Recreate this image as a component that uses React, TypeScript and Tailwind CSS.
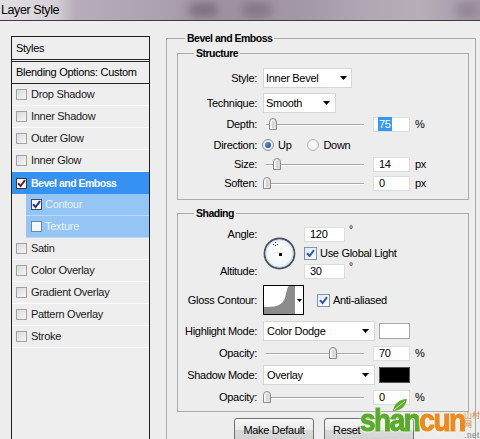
import React from "react";

function TickMark({ color }: { color: string }) {
  return (
    <svg width="9" height="9" viewBox="0 0 9 9" className="block">
      <path d="M1 4.2 L3.6 7 L8 1.2" fill="none" stroke={color} strokeWidth="2" />
    </svg>
  );
}

function ListCheck({ kind }: { kind: "off" | "active" | "subOn" | "subOff" }) {
  if (kind === "active")
    return (
      <div className="w-[11px] h-[11px] shrink-0 border border-[#3a3a3a] bg-white flex items-center justify-center">
        <TickMark color="#6b1f2a" />
      </div>
    );
  if (kind === "subOn")
    return (
      <div className="w-[11px] h-[11px] shrink-0 border border-[#3b4a6b] bg-white flex items-center justify-center">
        <TickMark color="#24368a" />
      </div>
    );
  if (kind === "subOff")
    return <div className="w-[11px] h-[11px] shrink-0 border border-[#6f86a6] bg-[#f2f7fc]" />;
  return <div className="w-[11px] h-[11px] shrink-0 border border-[#a2a2a2] bg-[linear-gradient(135deg,#d9d9d9,#f7f7f7)]" />;
}

function RightCheck() {
  return (
    <div className="w-[13px] h-[13px] shrink-0 border border-[#7f93b6] bg-[linear-gradient(135deg,#e3e9f2,#ffffff)] flex items-center justify-center">
      <TickMark color="#3656b0" />
    </div>
  );
}

function Arrow() {
  return (
    <svg width="7" height="4" viewBox="0 0 7 4" className="block shrink-0">
      <polygon points="0,0 7,0 3.5,4" fill="#000" />
    </svg>
  );
}

function Label({ children }: { children: React.ReactNode }) {
  return <div className="w-[79px] shrink-0 text-right">{children}</div>;
}

function Thumb({ left }: { left: number }) {
  return (
    <svg
      width="8"
      height="12"
      viewBox="0 0 8 12"
      className="absolute top-[2px] block"
      style={{ left }}
    >
      <defs>
        <linearGradient id="thg" x1="0" y1="0" x2="1" y2="0">
          <stop offset="0" stopColor="#ffffff" />
          <stop offset="1" stopColor="#d4d4d4" />
        </linearGradient>
      </defs>
      <path d="M0.5 11.5 V4 Q0.5 0.5 4 0.5 Q7.5 0.5 7.5 4 V11.5 Z" fill="url(#thg)" stroke="#8c8c8c" />
      <line x1="4" y1="3" x2="4" y2="10" stroke="#c2c2c2" />
    </svg>
  );
}

function Slider({ left }: { left: number }) {
  return (
    <div className="relative w-[104px] h-[16px] shrink-0">
      <div className="absolute left-[3px] right-[3px] top-[8px] h-[1px] bg-[#a8a8a8]" />
      <div className="absolute left-[3px] right-[3px] top-[9px] h-[1px] bg-white" />
      <Thumb left={left} />
    </div>
  );
}

function Field({ children }: { children: React.ReactNode }) {
  return (
    <div className="ml-[6px] w-[37px] h-[15px] shrink-0 bg-white border border-[#dcdcdc] flex items-center pl-[4px]">
      {children}
    </div>
  );
}

function SliderRow({
  label,
  left,
  value,
  unit,
  selected,
}: {
  label: string;
  left: number;
  value: string;
  unit: string;
  selected?: boolean;
}) {
  return (
    <div className="flex items-center h-[16px]">
      <Label>{label}</Label>
      <div className="ml-[6px]">
        <Slider left={left} />
      </div>
      <Field>
        {selected ? (
          <span className="bg-[#3399ff] text-white px-[1px] leading-[14px]">{value}</span>
        ) : (
          <span className="pl-[1px]">{value}</span>
        )}
      </Field>
      <span className="ml-[5px]">{unit}</span>
    </div>
  );
}

function AngleDial() {
  return (
    <svg width="33" height="33" viewBox="0 0 33 33" className="block">
      <defs>
        <radialGradient id="dialg" cx="0.45" cy="0.4" r="0.6">
          <stop offset="0" stopColor="#ffffff" />
          <stop offset="0.8" stopColor="#f1f4f8" />
          <stop offset="1" stopColor="#dfe7f0" />
        </radialGradient>
      </defs>
      <circle cx="16.5" cy="16.5" r="15" fill="url(#dialg)" stroke="#4a535d" strokeWidth="1.8" />
      <circle cx="16.5" cy="16.5" r="13.6" fill="none" stroke="#c9dbee" strokeWidth="1" />
      <g stroke="#222" strokeWidth="1">
        <line x1="12.5" y1="5" x2="12.5" y2="6" />
        <line x1="12.5" y1="8" x2="12.5" y2="9" />
        <line x1="10" y1="7.5" x2="11" y2="7.5" />
        <line x1="14" y1="7.5" x2="15" y2="7.5" />
      </g>
      <rect x="16" y="16" width="3" height="3" fill="#000" />
    </svg>
  );
}

function ContourPreview() {
  return (
    <div className="ml-[6px] w-[41px] h-[30px] shrink-0 border border-black bg-white flex items-center">
      <svg width="31" height="28" viewBox="0 0 31 28" className="block shrink-0">
        <path d="M0 28 V21 C10 21 18 20.5 21 12 C22.5 6 23 2 24.5 0 H31 V28 Z" fill="#8c8c8c" />
      </svg>
      <div className="ml-[2px]">
        <svg width="5" height="3" viewBox="0 0 5 3" className="block">
          <polygon points="0,0 5,0 2.5,3" fill="#000" />
        </svg>
      </div>
    </div>
  );
}

const listItems: { label: string; kind: "off" | "active" | "subOn" | "subOff" }[] = [
  { label: "Drop Shadow", kind: "off" },
  { label: "Inner Shadow", kind: "off" },
  { label: "Outer Glow", kind: "off" },
  { label: "Inner Glow", kind: "off" },
  { label: "Bevel and Emboss", kind: "active" },
  { label: "Contour", kind: "subOn" },
  { label: "Texture", kind: "subOff" },
  { label: "Satin", kind: "off" },
  { label: "Color Overlay", kind: "off" },
  { label: "Gradient Overlay", kind: "off" },
  { label: "Pattern Overlay", kind: "off" },
  { label: "Stroke", kind: "off" },
];

function ListRow({ label, kind }: { label: string; kind: "off" | "active" | "subOn" | "subOff" }) {
  if (kind === "active")
    return (
      <div className="h-[22px] bg-[#3592f3] pl-[4px] flex items-center">
        <ListCheck kind={kind} />
        <span className="ml-[4px] font-bold text-white text-[10.5px] tracking-[-0.5px]">{label}</span>
      </div>
    );
  if (kind === "subOn" || kind === "subOff")
    return (
      <div className="h-[22px] ml-[14px] bg-[#94c5f4] border-b border-[#bcdaf7] pl-[5px] flex items-center">
        <ListCheck kind={kind} />
        <span className="ml-[3px] text-[#e9f2fb]">{label}</span>
      </div>
    );
  return (
    <div className="h-[22px] border-b border-[#fbfbfb] pl-[4px] flex items-center">
      <ListCheck kind={kind} />
      <span className="ml-[4px] text-[#1a1a1a]">{label}</span>
    </div>
  );
}

export default function App() {
  return (
    <div className="relative w-[480px] h-[439px] overflow-hidden bg-[#ededed] text-black font-['Liberation_Sans',Arial,sans-serif] text-[11px] leading-[13px] tracking-[-0.3px]">
      {/* title bar */}
      <div className="relative h-[21px] border-b border-[#44394a] overflow-hidden bg-[linear-gradient(90deg,#e2dfe3_0px,#d6d1d7_55px,#b8aebb_75px,#aca1af_160px,#9d91a0_230px,#a398a6_300px,#b2a8b4_370px,#b7aeb9_420px,#a599a8_480px)]">
        <div className="absolute left-[188px] top-[3px] w-[30px] h-[14px] rounded-full bg-[#6c5f70] blur-[5px] opacity-70" />
        <div className="absolute left-[242px] top-[3px] w-[30px] h-[14px] rounded-full bg-[#6f6373] blur-[5px] opacity-60" />
        <div className="absolute left-[455px] top-[2px] w-[24px] h-[16px] rounded-full bg-[#8a7e8d] blur-[5px] opacity-70" />
        <span className="relative block pl-[1px] text-[12.5px] leading-[20px] tracking-[-0.4px] text-black">Layer Style</span>
      </div>

      {/* body */}
      <div className="flex items-start pl-[11px] pt-[11px]">
        {/* left list */}
        <div className="mt-[4px] w-[139px] h-[420px] shrink-0 border border-[#1e1e1e] bg-[#eeeeee]">
          <div className="h-[25px] border-b-[3px] border-double border-[#262626] pl-[4px] flex items-center">Styles</div>
          <div className="h-[22px] border-b border-[#262626] pl-[4px] flex items-center">Blending Options: Custom</div>
          {listItems.map((it) => (
            <ListRow key={it.label} label={it.label} kind={it.kind} />
          ))}
        </div>

        {/* right panel */}
        <fieldset className="ml-[16px] w-[310px] h-[430px] shrink-0 border border-[#ababab]">
          <legend className="ml-[18px] px-[2px] font-bold text-[10.5px] leading-[13px] tracking-[-0.5px]">
            Bevel and Emboss
          </legend>

          {/* Structure */}
          <fieldset className="ml-[10px] mt-[2px] w-[292px] border border-[#ababab]">
            <legend className="ml-[16px] px-[2px] font-bold text-[10.5px] leading-[13px] tracking-[-0.5px]">
              Structure
            </legend>
            <div className="flex flex-col pt-[8px] pb-[8px]">
              <div className="flex items-center h-[20px]">
                <Label>Style:</Label>
                <div className="ml-[6px] w-[89px] h-[20px] bg-white border border-[#d6d6d6] flex items-center justify-between pl-[2px] pr-[4px]">
                  <span>Inner Bevel</span>
                  <Arrow />
                </div>
              </div>
              <div className="flex items-center h-[20px] mt-[5px]">
                <Label>Technique:</Label>
                <div className="ml-[6px] w-[73px] h-[20px] bg-white border border-[#d6d6d6] flex items-center justify-between pl-[2px] pr-[5px]">
                  <span>Smooth</span>
                  <Arrow />
                </div>
              </div>
              <div className="mt-[3px]">
                <SliderRow label="Depth:" left={6} value="75" unit="%" selected />
              </div>
              <div className="flex items-center h-[16px] mt-[5px]">
                <Label>Direction:</Label>
                <div className="ml-[5px] w-[12px] h-[12px] rounded-full border border-[#8a8f96] bg-[radial-gradient(circle,#ffffff,#dfe3e8)] flex items-center justify-center">
                  <div className="w-[6px] h-[6px] rounded-full bg-[radial-gradient(circle_at_35%_35%,#5f8fd0,#163f7a)]" />
                </div>
                <span className="ml-[4px]">Up</span>
                <div className="ml-[16px] w-[12px] h-[12px] rounded-full border border-[#b5b5b5] bg-[radial-gradient(circle,#ffffff,#e6e6e6)]" />
                <span className="ml-[4px]">Down</span>
              </div>
              <div className="mt-[3px]">
                <SliderRow label="Size:" left={10} value="14" unit="px" />
              </div>
              <div className="mt-[3px]">
                <SliderRow label="Soften:" left={0} value="0" unit="px" />
              </div>
            </div>
          </fieldset>

          {/* Shading */}
          <fieldset className="ml-[10px] mt-[7px] w-[292px] border border-[#ababab]">
            <legend className="ml-[16px] px-[2px] font-bold text-[10.5px] leading-[13px] tracking-[-0.5px]">
              Shading
            </legend>
            <div className="flex flex-col pt-[7px] pb-[6px]">
              <div className="flex h-[52px]">
                <div className="w-[79px] shrink-0 flex flex-col justify-between text-right">
                  <div className="h-[15px] flex items-center justify-end">Angle:</div>
                  <div className="h-[15px] flex items-center justify-end">Altitude:</div>
                </div>
                <div className="ml-[6px] self-center">
                  <AngleDial />
                </div>
                <div className="ml-[8px] flex flex-col justify-between">
                  <div className="flex items-start h-[15px]">
                    <div className="w-[41px] h-[15px] bg-white border border-[#dcdcdc] flex items-center pl-[5px]">120</div>
                    <span className="ml-[4px] text-[10px] leading-[10px] -mt-[2px]">°</span>
                  </div>
                  <div className="flex items-center h-[14px]">
                    <RightCheck />
                    <span className="ml-[3px]">Use Global Light</span>
                  </div>
                  <div className="flex items-start h-[15px]">
                    <div className="w-[41px] h-[15px] bg-white border border-[#dcdcdc] flex items-center pl-[5px]">30</div>
                    <span className="ml-[4px] text-[10px] leading-[10px] -mt-[2px]">°</span>
                  </div>
                </div>
              </div>

              <div className="flex items-center h-[30px] mt-[6px]">
                <Label>Gloss Contour:</Label>
                <ContourPreview />
                <div className="ml-[13px]">
                  <RightCheck />
                </div>
                <span className="ml-[3px]">Anti-aliased</span>
              </div>

              <div className="flex items-center h-[20px] mt-[6px]">
                <Label>Highlight Mode:</Label>
                <div className="ml-[6px] w-[112px] h-[20px] bg-white border border-[#d6d6d6] flex items-center justify-between pl-[3px] pr-[5px]">
                  <span>Color Dodge</span>
                  <Arrow />
                </div>
                <div className="ml-[4px] w-[31px] h-[16px] bg-white border border-[#a8a8a8]" />
              </div>
              <div className="mt-[4px]">
                <SliderRow label="Opacity:" left={66} value="70" unit="%" />
              </div>
              <div className="flex items-center h-[20px] mt-[4px]">
                <Label>Shadow Mode:</Label>
                <div className="ml-[6px] w-[112px] h-[20px] bg-white border border-[#d6d6d6] flex items-center justify-between pl-[3px] pr-[5px]">
                  <span>Overlay</span>
                  <Arrow />
                </div>
                <div className="ml-[4px] w-[31px] h-[16px] bg-black border border-[#555]" />
              </div>
              <div className="mt-[4px]">
                <SliderRow label="Opacity:" left={0} value="0" unit="%" />
              </div>
            </div>
          </fieldset>

          {/* buttons */}
          <div className="flex justify-center gap-[10px] mt-[6px] pl-[6px]">
            <div className="w-[80px] h-[24px] rounded-[3px] border border-[#707070] bg-[linear-gradient(180deg,#f7f7f7,#e9e9e9_50%,#d9d9d9_51%,#d2d2d2)] flex items-center justify-center">
              Make Default
            </div>
            <div className="w-[90px] h-[24px] rounded-[3px] border border-[#707070] bg-[linear-gradient(180deg,#f7f7f7,#e9e9e9_50%,#d9d9d9_51%,#d2d2d2)] flex items-center pl-[8px]">
              Reset
            </div>
          </div>
        </fieldset>
      </div>

      {/* watermark */}
      <svg width="16" height="14" viewBox="0 0 16 14" className="absolute left-[392px] top-[398px]">
        <path d="M1 13 C2 6 7 1 15 1 C14 8 9 13 1 13 Z" fill="#5cad2c" />
        <path d="M2 12 C6 9 9 6 13 3" stroke="#e8f5dc" strokeWidth="0.8" fill="none" />
      </svg>
      <div className="absolute left-[360px] top-[409px] origin-bottom scale-y-[1.15] whitespace-nowrap font-bold text-[28px] leading-[28px] tracking-[-1.5px] [text-shadow:0_0_2px_#ffffff,0_0_2px_#ffffff,0_0_3px_#ffffff]">
        <span className="text-[#5aab2a] [-webkit-text-stroke:1px_#5aab2a]">shan</span>
        <span className="text-[#ee8a1c] [-webkit-text-stroke:1px_#ee8a1c]">cun</span>
      </div>
      <div className="absolute left-[464px] top-[410px] flex flex-col items-start">
        <span className="text-[8px] leading-[9px] tracking-[0px] text-[#d3822c] font-['Noto_Sans_CJK_SC',sans-serif]">山村网</span>
        <span className="mt-[1px] text-[10px] leading-[11px] tracking-[0.3px] text-[#8a8a8a] font-['Liberation_Serif',serif]">.net</span>
      </div>
    </div>
  );
}
